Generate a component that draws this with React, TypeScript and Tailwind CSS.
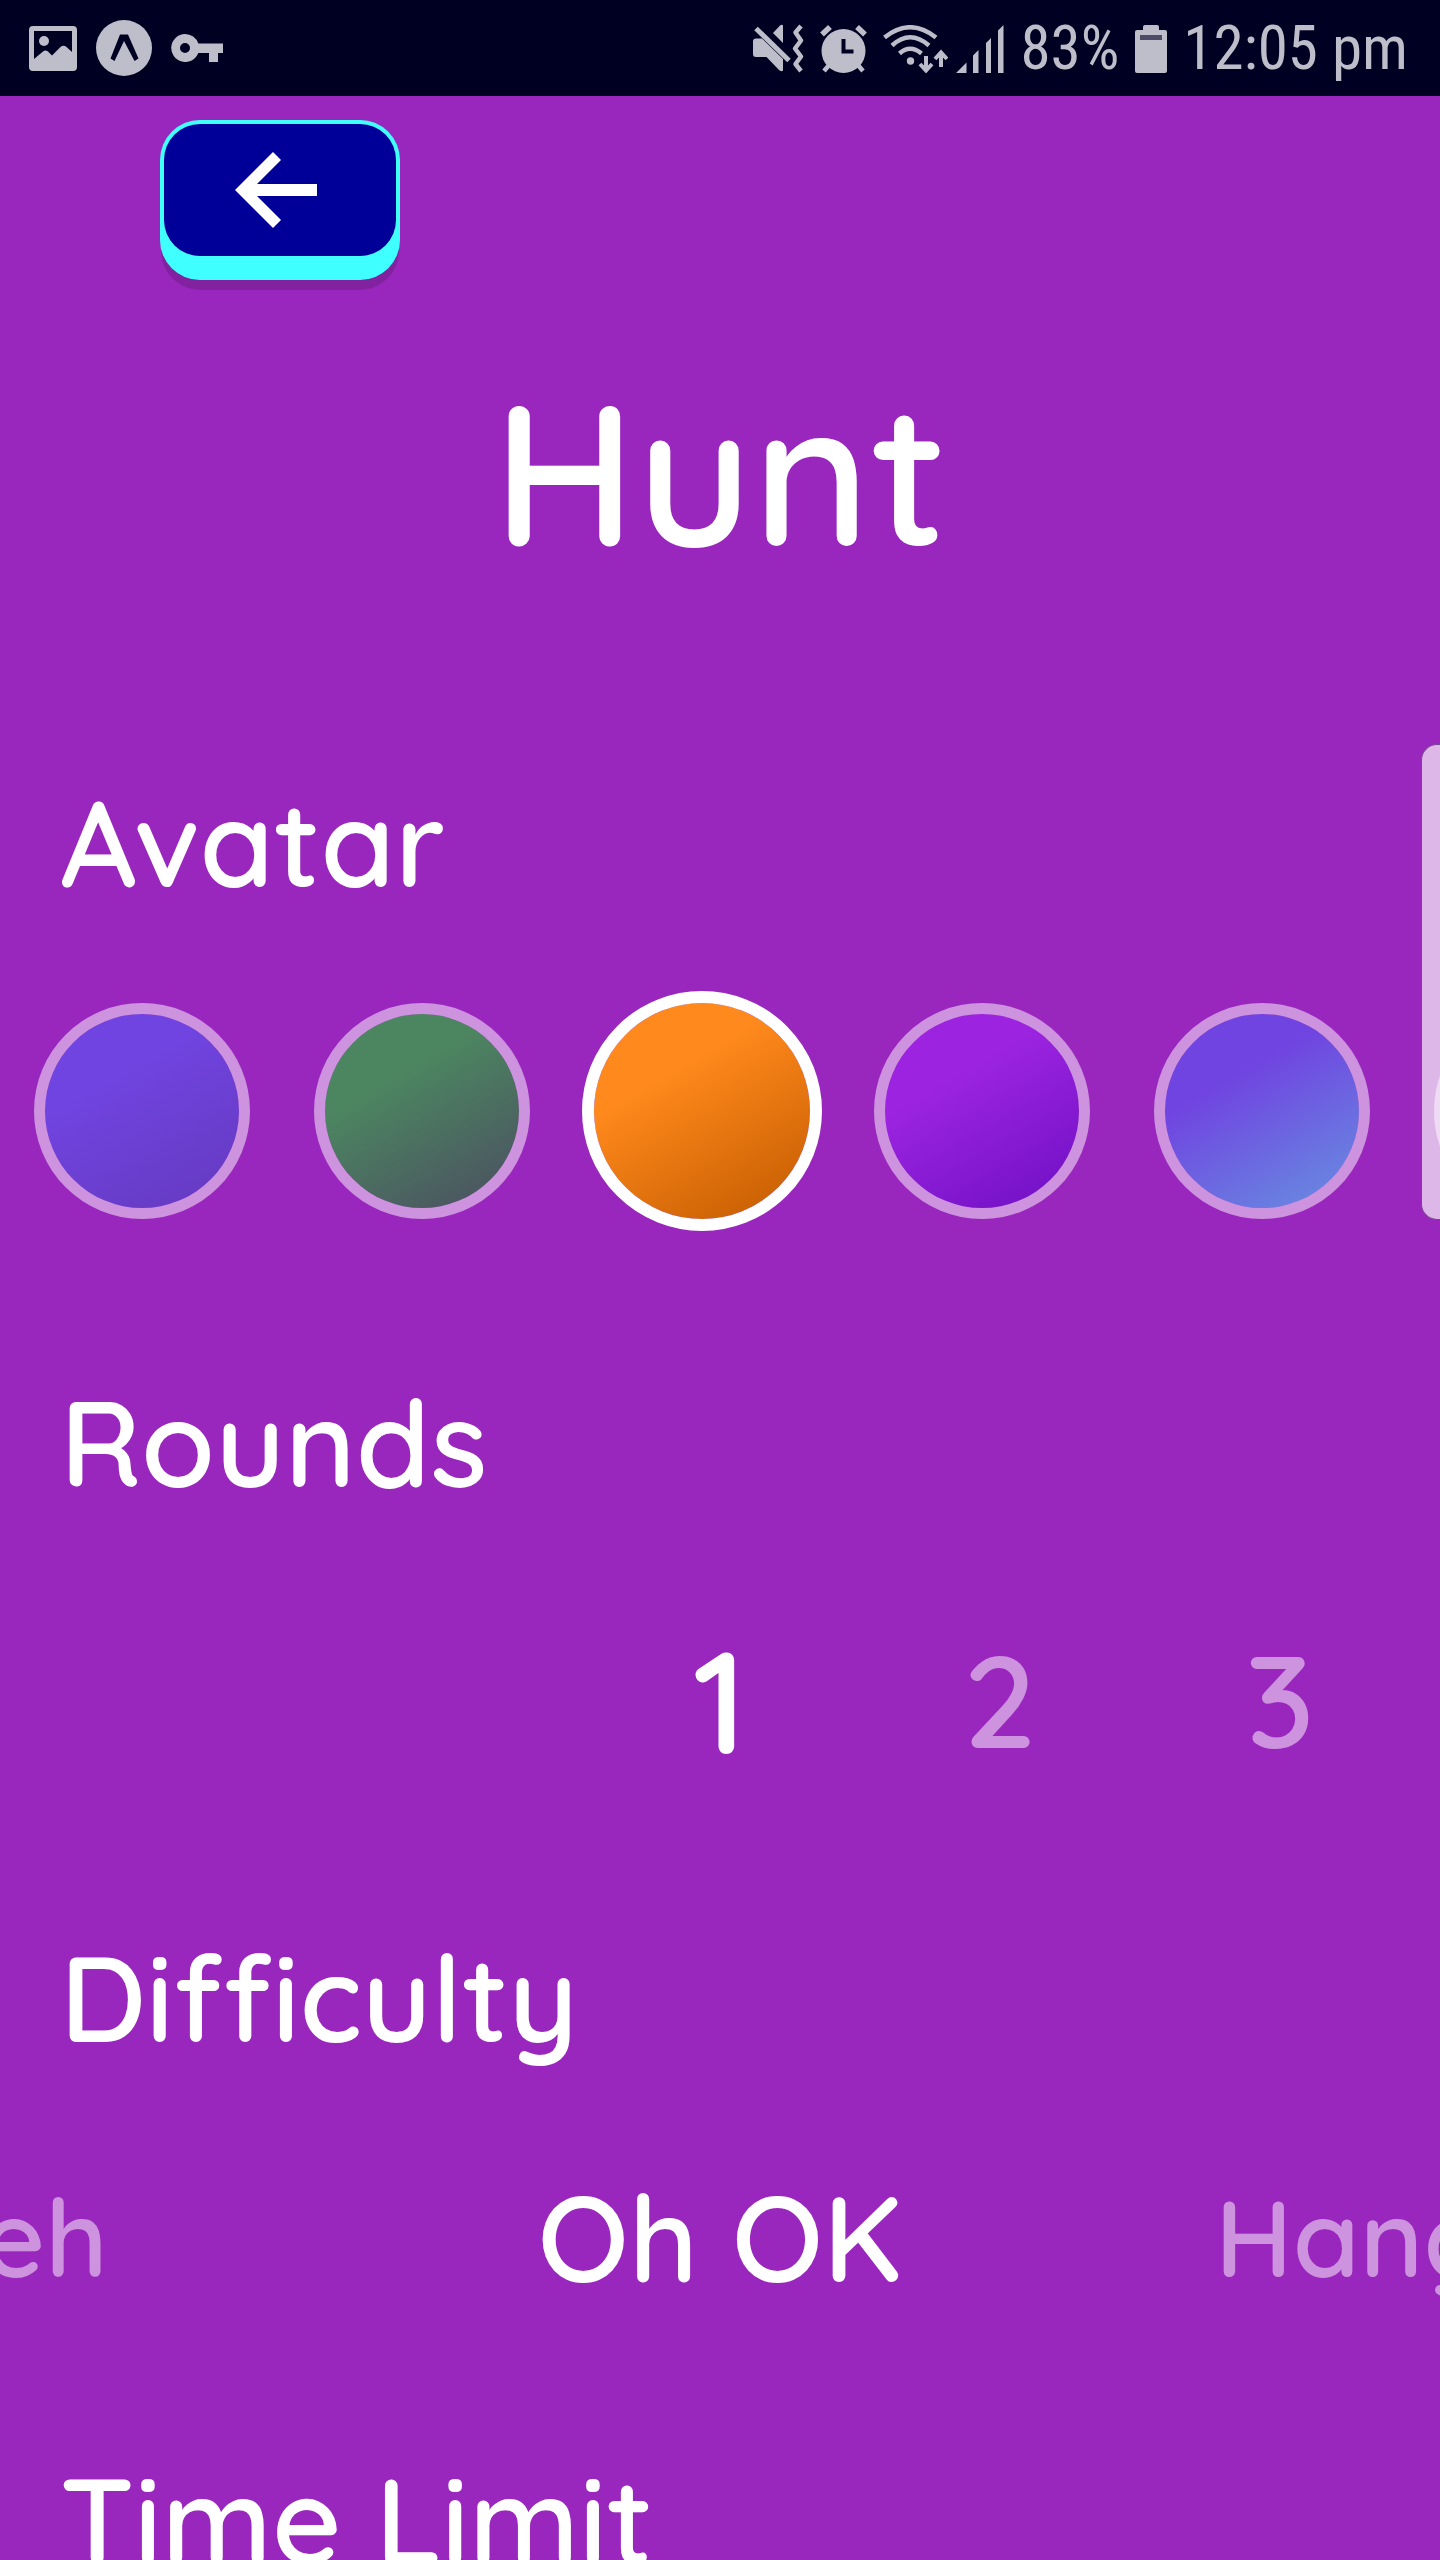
import { useState } from 'react';
import type { ReactNode } from 'react';

function ImageIcon() {
  return (
    <svg aria-hidden="true" className="h-[45px] w-[48px]" viewBox="0 0 48 45" fill="currentColor">
      <path fillRule="evenodd" d="M4 0H44a4 4 0 0 1 4 4V41a4 4 0 0 1-4 4H4a4 4 0 0 1-4-4V4A4 4 0 0 1 4 0ZM5 5V33L14 25.500Q16.500 23.500 19 25.500L23 29.500L31.500 21Q34.500 18.500 37.500 21L43 26V5Z" />
      <circle cx="15" cy="15" r="5" />
    </svg>
  );
}

function ExpoIcon() {
  return (
    <svg aria-hidden="true" className="h-[56px] w-[56px]" viewBox="0 0 56 56">
      <circle cx="28" cy="28" r="28" fill="currentColor" />
      <path d="M24 14.500H32L42.500 38.500L38.500 41L28 21L18.500 41L14.500 38.500Z" fill="#000022" />
    </svg>
  );
}

function KeyIcon() {
  return (
    <svg aria-hidden="true" className="h-[28px] w-[52px]" viewBox="0 0 52 28" fill="currentColor">
      <path fillRule="evenodd" d="M14 0A14 14 0 0 1 27.300 9.500H52V19H47V28H38V19H27.300A14 14 0 1 1 14 0ZM14 9A5 5 0 1 0 14 19A5 5 0 1 0 14 9Z" />
    </svg>
  );
}

function MuteVibrateIcon() {
  return (
    <svg aria-hidden="true" className="h-[49px] w-[51px]" viewBox="0 0 51 49" fill="currentColor">
      <path d="M3 14.500H9L30 35V46.500Q28 48 26 46L13.500 33H3Q0 33 0 30V17.500Q0 14.500 3 14.500Z" />
      <path d="M20 9L27 1.500Q29 0 30 1.500V19Z" />
      <path d="M3 4.500L36 36.500" stroke="currentColor" strokeWidth="5" />
      <path d="M48 2L42.500 8.500L48 16.500L42 24.500L48 32.500L42.500 40L48 47" fill="none" stroke="currentColor" strokeWidth="4.500" strokeLinejoin="round" />
    </svg>
  );
}

function AlarmIcon() {
  return (
    <svg aria-hidden="true" className="h-[48px] w-[47px]" viewBox="0 0 47 48" fill="currentColor">
      <circle cx="23.500" cy="26" r="22" />
      <path d="M2 9.500L10 2M45 9.500L37 2" stroke="currentColor" strokeWidth="5.500" />
      <path d="M10 39L4 46M37 39L43 46" stroke="currentColor" strokeWidth="4.500" />
      <path d="M23.500 14V26.500H33.500" fill="none" stroke="#000022" strokeWidth="4" />
    </svg>
  );
}

function WifiIcon() {
  return (
    <svg aria-hidden="true" className="h-[48px] w-[65px]" viewBox="0 0 65 48" fill="none" stroke="currentColor" strokeWidth="4.500">
      <path d="M1.500 12.500Q27 -8 53 12.500" />
      <path d="M9 20.500Q27 4 46 20.500" />
      <path d="M16.500 28.500Q27 19 38.500 28.500" />
      <circle cx="27.500" cy="36" r="3.700" fill="currentColor" stroke="none" />
      <path d="M43 31V45M37 39L43 45.500L49 39M58 42V28M52 34L58 27.500L64 34" strokeWidth="4" />
    </svg>
  );
}

function SignalIcon() {
  return (
    <svg aria-hidden="true" className="h-[48px] w-[48px]" viewBox="0 0 48 48" fill="currentColor">
      <path d="M0 48L10.500 37.500V48ZM17 30.500L22.500 25V48H17ZM30 18L35 13V48H30ZM42 5.500L47.500 0V48H42Z" />
    </svg>
  );
}

function BatteryIcon() {
  return (
    <svg aria-hidden="true" className="h-[48px] w-[32px]" viewBox="0 0 32 48" fill="currentColor">
      <path d="M10 0H22Q24 0 24 2V5H30Q32 5 32 7V46Q32 48 30 48H2Q0 48 0 46V7Q0 5 2 5H8V2Q8 0 10 0Z" />
      <path d="M5 10H27V15H5Z" fill="#4c4c66" />
    </svg>
  );
}

function StatusBar() {
  return (
    <header className="flex h-24 shrink-0 items-center justify-between bg-[#000022] pr-8 pl-[29px] text-[#bebecb]">
      <div className="flex items-center gap-[19px]">
        <ImageIcon />
        <ExpoIcon />
        <KeyIcon />
      </div>
      <div className="flex items-center pt-px font-['Roboto_Condensed','Roboto',sans-serif] text-[61px] leading-none font-normal">
        <div className="flex items-center gap-4">
          <MuteVibrateIcon />
          <AlarmIcon />
          <WifiIcon />
        </div>
        <div className="ml-2 flex items-center gap-4">
          <SignalIcon />
          <span>83%</span>
          <BatteryIcon />
          <span>12:05 pm</span>
        </div>
      </div>
    </header>
  );
}

function Section({ title, children }: { title: string; children?: ReactNode }) {
  return (
    <fieldset className="min-w-0">
      <legend className="ml-[60px] text-[120px] leading-[150px]">{title}</legend>
      {children}
    </fieldset>
  );
}

const avatars = [
  { name: 'Indigo', fill: 'bg-[linear-gradient(150deg,#7044e0_33%,#653ac0_97%)]' },
  { name: 'Green', fill: 'bg-[linear-gradient(150deg,#4c8660_33%,#4b5460_92%)]' },
  { name: 'Orange', fill: 'bg-[linear-gradient(150deg,#ff891c_33%,#c45c00_97%)]' },
  { name: 'Violet', fill: 'bg-[linear-gradient(150deg,#9c24e0_33%,#7010c4_97%)]' },
  { name: 'Sky', fill: 'bg-[linear-gradient(150deg,#7044e0_33%,#6888e0_92%)]' },
  { name: 'White', fill: 'bg-white/50' },
];

export default function App() {
  const [avatar, setAvatar] = useState('Orange');
  const [rounds, setRounds] = useState('1');
  const [difficulty, setDifficulty] = useState('Oh OK');

  return (
    <div className="relative flex h-screen flex-col overflow-hidden bg-[#9a27bd] font-['Quicksand',sans-serif] font-semibold text-white">
      <StatusBar />
      <main>
        <button
          type="button"
          aria-label="Back"
          className="mt-6 ml-40 flex h-40 w-60 rounded-[40px] bg-[#40ffff] px-1 pt-1 pb-6 shadow-[0_11px_0_-1px_#8322a0]"
        >
          <span className="flex h-full w-full items-center justify-center rounded-[36px] bg-[#000099]">
            <svg aria-hidden="true" className="mr-2 h-[76px] w-[82px]" viewBox="0 0 82 76" fill="#fff">
              <path d="M0 38L38 0L46 8L22 32H82V44H22L46 68L38 76Z" />
            </svg>
          </span>
        </button>

        <h1 className="mt-[66px] text-center text-[200px] leading-[250px]">Hunt</h1>

        <div className="mt-[171px]">
          <Section title="Avatar">
            <div className="mt-[74px] mb-[136px] ml-0.5 flex h-[240px] items-center">
              {avatars.map(({ name, fill }) => (
                <div key={name} className="flex w-[280px] shrink-0 justify-center">
                  <input
                    type="radio"
                    name="avatar"
                    aria-label={name}
                    checked={avatar === name}
                    onChange={() => setAvatar(name)}
                    className={`h-[216px] w-[216px] appearance-none rounded-full border-[11px] border-white/50 bg-clip-padding checked:h-[240px] checked:w-[240px] checked:border-[12px] checked:border-white ${fill}`}
                  />
                </div>
              ))}
            </div>
          </Section>

          <Section title="Rounds">
            <div className="mt-[74px] mb-[114px] ml-[calc(50%-140px)] flex h-[217px] items-center">
              {['1', '2', '3'].map((n) => (
                <label key={n} className="w-[280px] shrink-0 text-center text-[130px] text-white/50 has-checked:text-[144px] has-checked:text-white">
                  <input type="radio" name="rounds" className="sr-only" checked={rounds === n} onChange={() => setRounds(n)} />
                  {n}
                </label>
              ))}
            </div>
          </Section>

          <Section title="Difficulty">
            <div className="mt-[74px] mb-[116px] flex h-[182px] items-center justify-center">
              {['Meh', 'Oh OK', 'Hang'].map((d) => (
                <label
                  key={d}
                  className="w-[560px] shrink-0 text-center text-[108px] whitespace-nowrap text-white/50 first:w-[700px] first:pr-[332px] first:text-right last:w-[700px] last:pl-[215px] last:text-left has-checked:text-[120px] has-checked:text-white"
                >
                  <input type="radio" name="difficulty" className="sr-only" checked={difficulty === d} onChange={() => setDifficulty(d)} />
                  {d}
                </label>
              ))}
            </div>
          </Section>

          <Section title="Time Limit" />
        </div>
      </main>
      <div className="absolute top-[744px] right-0 h-[476px] w-[19px] rounded-l-[16px] border border-r-0 border-[#7b4690] bg-white/67" />
    </div>
  );
}
